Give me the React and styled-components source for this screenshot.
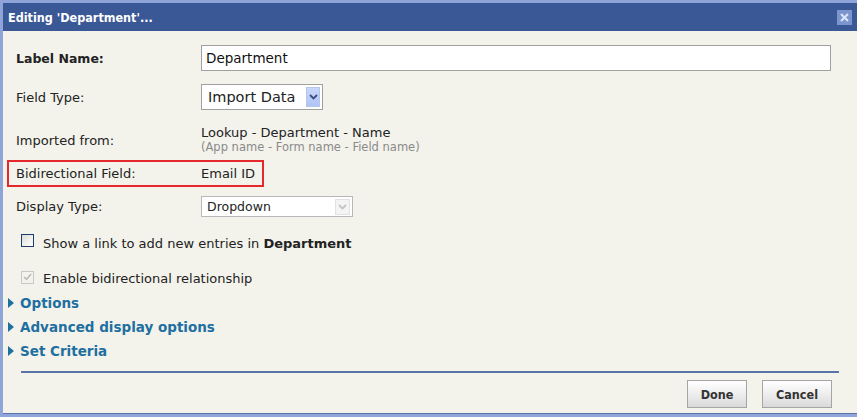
import React from "react";
import styled, { createGlobalStyle } from "styled-components";

const GlobalStyle = createGlobalStyle`
  html, body {
    margin: 0;
    padding: 0;
    background: #8fa4d8;
  }
  body {
    font-family: "DejaVu Sans", Verdana, sans-serif;
  }
`;

const Frame = styled.div`
  width: 857px;
  height: 417px;
  box-sizing: border-box;
  padding: 3px 0 0 3px;
  background: #8fa4d8;
`;

const Dialog = styled.div`
  display: flex;
  flex-direction: column;
  height: 411px;
`;

const TitleBar = styled.div`
  height: 28px;
  flex: none;
  display: flex;
  align-items: center;
  justify-content: space-between;
  padding: 0 5px 0 5px;
  background: #3b5896;
  color: #fff;
  font-family: "DejaVu Sans Condensed", "DejaVu Sans", sans-serif;
  font-weight: bold;
  font-size: 12.5px;
`;

const CloseButton = styled.button`
  width: 15px;
  height: 15px;
  padding: 0;
  border: none;
  background: #7b95cf;
  display: flex;
  align-items: center;
  justify-content: center;
`;

const Body = styled.div`
  flex: 1;
  background: #f3f3ec;
  border-bottom: 1px solid #5a74a8;
  padding: 14px 13px 0 13px;
  display: flex;
  flex-direction: column;
`;

const Row = styled.div`
  display: flex;
  align-items: center;
  height: ${(p) => p.$h || 26}px;
  margin-top: ${(p) => p.$mt || 0}px;
  font-size: 13px;
  color: #222;
  box-sizing: border-box;
  ${(p) =>
    p.$highlight &&
    `
    margin-left: -9px;
    padding-left: 7px;
    width: 257px;
    border: 2px solid #e4282b;
  `}
`;

const Label = styled.div`
  width: 185px;
  flex: none;
  font-weight: ${(p) => (p.$bold ? "bold" : "normal")};
  font-size: ${(p) => (p.$bold ? 12.5 : 13)}px;
`;

const TextInput = styled.input`
  width: 630px;
  height: 26px;
  box-sizing: border-box;
  border: 1px solid #a0a0a0;
  background: #fff;
  font-family: "DejaVu Sans", Verdana, sans-serif;
  font-size: 13.5px;
  color: #111;
  padding: 0 4px;
  outline: none;
`;

const SelectBox = styled.div`
  width: ${(p) => p.$w}px;
  height: ${(p) => p.$h}px;
  box-sizing: border-box;
  border: 1px solid ${(p) => (p.$disabled ? "#b8b8b8" : "#a0a0a0")};
  background: #fff;
  display: flex;
  align-items: center;
  justify-content: space-between;
  padding: 0 2px 0 ${(p) => (p.$large ? 6 : 5)}px;
  font-size: ${(p) => (p.$large ? 14.5 : 12.5)}px;
  color: #222;
`;

const ArrowButton = styled.span`
  width: ${(p) => (p.$disabled ? 15 : 14)}px;
  height: ${(p) => (p.$disabled ? 16 : 20)}px;
  display: flex;
  align-items: center;
  justify-content: center;
  border: 1px solid ${(p) => (p.$disabled ? "#e2e2e2" : "#b5c6ec")};
  background: ${(p) =>
    p.$disabled ? "#f4f4f4" : "linear-gradient(#c9d7fb, #b0c4f5)"};
  box-sizing: border-box;
`;

const ValueStack = styled.div`
  display: flex;
  flex-direction: column;
  line-height: 15px;
`;

const SubText = styled.span`
  font-size: 11.5px;
  color: #8a8a8a;
`;

const CheckRow = styled.label`
  display: flex;
  align-items: center;
  gap: 9px;
  height: 26px;
  margin-top: ${(p) => p.$mt || 0}px;
  padding-left: 5px;
  font-size: 13px;
  color: #222;
`;

const Box = styled.span`
  width: 13px;
  height: 13px;
  flex: none;
  box-sizing: border-box;
  border: 1px solid ${(p) => (p.$disabled ? "#c8c8c8" : "#1c3c6c")};
  background: ${(p) =>
    p.$disabled ? "#f3f3ec" : "linear-gradient(135deg, #dcdcd6, #ffffff)"};
  display: flex;
  align-items: center;
  justify-content: center;
  margin-top: ${(p) => (p.$disabled ? -2 : -6)}px;
`;

const Sections = styled.div`
  display: flex;
  flex-direction: column;
  margin-left: -8px;
`;

const SectionLink = styled.a`
  display: flex;
  align-items: center;
  gap: 6px;
  height: 24px;
  font-size: 13.5px;
  font-weight: bold;
  color: #1f6fa0;
  text-decoration: none;
  cursor: pointer;
`;

const Divider = styled.div`
  height: 2px;
  margin: 8px 5px 0 5px;
  background: #5a74a8;
`;

const Footer = styled.div`
  display: flex;
  justify-content: flex-end;
  gap: 15px;
  margin: 7px 12px 0 0;
`;

const Button = styled.button`
  width: ${(p) => p.$w}px;
  height: 28px;
  border: 1px solid #a5a5a5;
  background: linear-gradient(#ffffff, #eaeaea 60%, #d9d9d9);
  font-family: "DejaVu Sans Condensed", "DejaVu Sans", sans-serif;
  font-weight: bold;
  font-size: 12.5px;
  color: #333;
  padding: 0;
`;

const Chevron = ({ color }) => (
  <svg width="9" height="6" viewBox="0 0 9 6">
    <path d="M1 1 L4.5 4.5 L8 1" fill="none" stroke={color} strokeWidth="1.8" />
  </svg>
);

const Triangle = () => (
  <svg width="6" height="10" viewBox="0 0 6 10">
    <path d="M0 0 L6 5 L0 10 Z" fill="#1f6fa0" />
  </svg>
);

const sections = ["Options", "Advanced display options", "Set Criteria"];

export default function App() {
  return (
    <>
      <GlobalStyle />
      <Frame>
        <Dialog>
          <TitleBar>
            <span>Editing 'Department'...</span>
            <CloseButton aria-label="Close">
              <svg width="9" height="9" viewBox="0 0 9 9">
                <path
                  d="M1 1 L8 8 M8 1 L1 8"
                  stroke="#dfe6f7"
                  strokeWidth="2"
                />
              </svg>
            </CloseButton>
          </TitleBar>
          <Body>
            <Row>
              <Label $bold>Label Name:</Label>
              <TextInput defaultValue="Department" />
            </Row>
            <Row $mt={13}>
              <Label>Field Type:</Label>
              <SelectBox $w={122} $h={26} $large>
                Import Data
                <ArrowButton>
                  <Chevron color="#3a4f86" />
                </ArrowButton>
              </SelectBox>
            </Row>
            <Row $h={40} $mt={10}>
              <Label>Imported from:</Label>
              <ValueStack>
                <span>Lookup - Department - Name</span>
                <SubText>(App name - Form name - Field name)</SubText>
              </ValueStack>
            </Row>
            <Row $h={27} $highlight>
              <Label>Bidirectional Field:</Label>
              <span style={{ whiteSpace: "nowrap" }}>Email ID</span>
            </Row>
            <Row $h={21} $mt={9}>
              <Label>Display Type:</Label>
              <SelectBox $w={152} $h={21} $disabled>
                Dropdown
                <ArrowButton $disabled>
                  <Chevron color="#c4c4c4" />
                </ArrowButton>
              </SelectBox>
            </Row>
            <CheckRow $mt={13}>
              <Box />
              <span>
                Show a link to add new entries in <b>Department</b>
              </span>
            </CheckRow>
            <CheckRow $mt={9}>
              <Box $disabled>
                <svg width="9" height="8" viewBox="0 0 9 8">
                  <path
                    d="M1 4 L3.5 6.5 L8 1"
                    fill="none"
                    stroke="#b8b8b8"
                    strokeWidth="1.5"
                  />
                </svg>
              </Box>
              <span>Enable bidirectional relationship</span>
            </CheckRow>
            <Sections>
              {sections.map((s) => (
                <SectionLink key={s}>
                  <Triangle />
                  {s}
                </SectionLink>
              ))}
            </Sections>
            <Divider />
            <Footer>
              <Button $w={60}>Done</Button>
              <Button $w={70}>Cancel</Button>
            </Footer>
          </Body>
        </Dialog>
      </Frame>
    </>
  );
}
